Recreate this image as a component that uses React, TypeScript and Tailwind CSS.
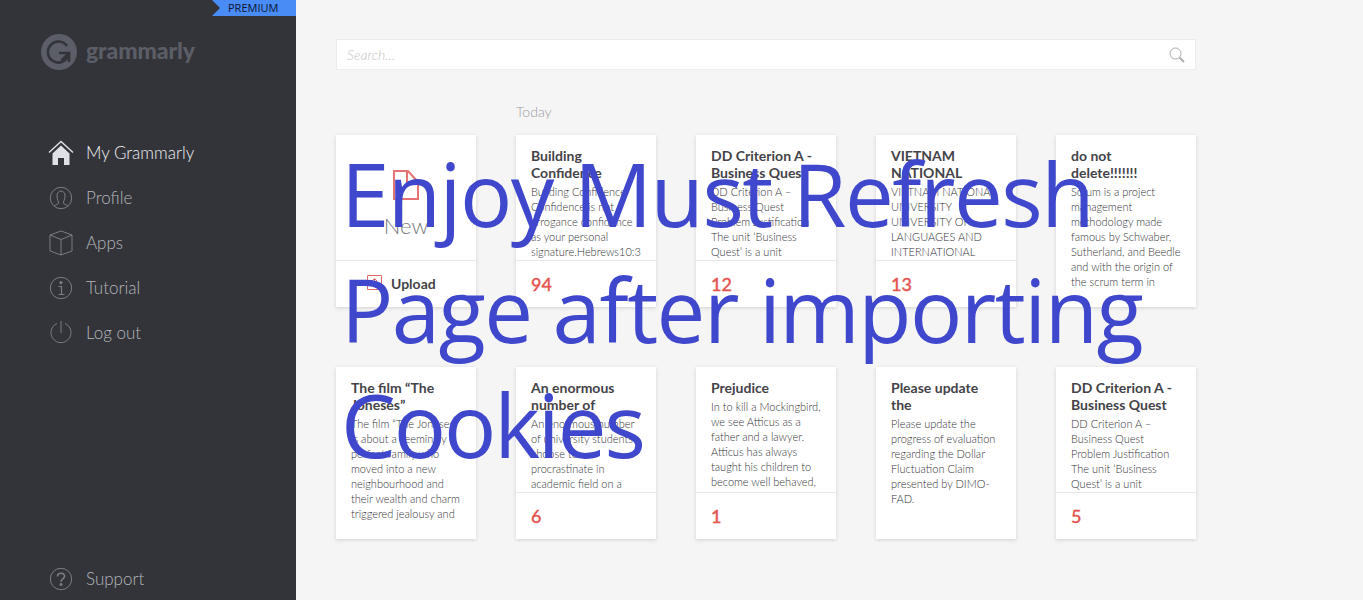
import React from "react";

type CardData = { title: string[]; body: string[]; count?: string };

const row1: CardData[] = [
  { title: ["Building", "Confidence"], body: ["Building Confidence", "Confidence is not", "arrogance confidence", "as your personal", "signature.Hebrews10:3"], count: "94" },
  { title: ["DD Criterion A -", "Business Quest"], body: ["DD Criterion A –", "Business Quest", "Problem Justification", "The unit ‘Business", "Quest’ is a unit"], count: "12" },
  { title: ["VIETNAM", "NATIONAL"], body: ["VIETNAM NATIONAL", "UNIVERSITY", "UNIVERSITY OF", "LANGUAGES AND", "INTERNATIONAL"], count: "13" },
  { title: ["do not", "delete!!!!!!!"], body: ["Scrum is a project", "management", "methodology made", "famous by Schwaber,", "Sutherland, and Beedle", "and with the origin of", "the scrum term in"] },
];

const row2: CardData[] = [
  { title: ["The film “The", "Joneses”"], body: ["The film “The Joneses”", "is about a seemingly", "perfect family who", "moved into a new", "neighbourhood and", "their wealth and charm", "triggered jealousy and"] },
  { title: ["An enormous", "number of"], body: ["An enormous number", "of university students", "choose to", "procrastinate in", "academic field on a"], count: "6" },
  { title: ["Prejudice"], body: ["In to kill a Mockingbird,", "we see Atticus as a", "father and a lawyer.", "Atticus has always", "taught his children to", "become well behaved,"], count: "1" },
  { title: ["Please update", "the"], body: ["Please update the", "progress of evaluation", "regarding the Dollar", "Fluctuation Claim", "presented by DIMO-", "FAD."] },
  { title: ["DD Criterion A -", "Business Quest"], body: ["DD Criterion A –", "Business Quest", "Problem Justification", "The unit ‘Business", "Quest’ is a unit"], count: "5" },
];

function Card({ title, body, count }: CardData) {
  return (
    <div className="w-[140px] h-[172px] bg-white shadow-[0_1px_4px_rgba(0,0,0,0.14)] flex flex-col">
      <div className={`${count ? "h-[125px]" : "h-[172px]"} overflow-hidden px-[15px] pt-[12px]`}>
        <div className="text-[14px] leading-[17px] font-bold text-[#444348]">
          {title.map((t) => (
            <div key={t} className="whitespace-nowrap">{t}</div>
          ))}
        </div>
        <div className="mt-[3px] text-[11px] leading-[15px] font-light text-[#333338]">
          {body.map((t) => (
            <div key={t} className="whitespace-nowrap">{t}</div>
          ))}
        </div>
      </div>
      {count && (
        <div className="flex-1 border-t border-[#e8e8e8] px-[15px] pt-[13px] text-[18px] leading-[21px] font-medium text-[#e5534f] [-webkit-text-stroke:0.3px_#e5534f]">
          {count}
        </div>
      )}
    </div>
  );
}

function NewCard() {
  return (
    <div className="w-[140px] h-[172px] bg-white shadow-[0_1px_4px_rgba(0,0,0,0.14)] flex flex-col">
      <div className="h-[125px] flex flex-col items-center pt-[35px]">
        <svg width="26" height="30" viewBox="0 0 26 30" fill="none" stroke="#e57373" strokeWidth="2">
          <path d="M1 1h14l10 11v17H1z" />
          <path d="M14 1v11h11" />
        </svg>
        <div className="mt-[13px] text-[22px] leading-[25px] font-light text-[#77777b]">New</div>
      </div>
      <div className="flex-1 border-t border-[#e8e8e8] flex items-start gap-[9px] pt-[14px] pl-[31px]">
        <svg width="15" height="15" viewBox="0 0 15 15" fill="none" stroke="#e46a6a" strokeWidth="1">
          <path d="M.5.5h14v14H.5z" />
          <path d="M7.5 11V4M5 6l2.5-2.5L10 6" />
        </svg>
        <div className="text-[14px] leading-[17px] font-bold text-[#444348]">Upload</div>
      </div>
    </div>
  );
}

const stroke = "#7b7d82";

const icons: Record<string, React.ReactNode> = {
  home: (
    <svg width="26" height="26" viewBox="0 0 26 26" fill="none">
      <path d="M1 12.5 13 1.5l12 11" stroke="#dfe1e6" strokeWidth="1.4" />
      <path d="M4.5 13.5 13 5.5l8.5 8V25H16v-7h-6v7H4.5z" fill="#dfe1e6" />
    </svg>
  ),
  profile: (
    <svg width="24" height="24" viewBox="0 0 24 24" fill="none" stroke={stroke} strokeWidth="1">
      <circle cx="12" cy="12" r="10.7" />
      <path d="M5 20c2-1.500 4-1.500 4.600-3 .3-1-1.600-3-1.600-7 0-3 1.600-5 4-5s4 2 4 5c0 4-1.900 6-1.600 7 .6 1.500 2.600 1.500 4.600 3" />
    </svg>
  ),
  apps: (
    <svg width="24" height="26" viewBox="0 0 24 26" fill="none" stroke={stroke} strokeWidth="1">
      <path d="M12 1 23 5v16l-11 4-11-4V5z" />
      <path d="M1 5l11 4.500L23 5M12 9.500V25" />
    </svg>
  ),
  tutorial: (
    <svg width="24" height="24" viewBox="0 0 24 24" fill="none" stroke={stroke} strokeWidth="1">
      <circle cx="12" cy="12" r="10.700" />
      <circle cx="12" cy="6.700" r="1.200" fill={stroke} />
      <path d="M9.500 10.500H12.500V18M9.500 18.500h6" strokeWidth="1.200" />
    </svg>
  ),
  logout: (
    <svg width="24" height="24" viewBox="0 0 24 24" fill="none" stroke={stroke} strokeWidth="1">
      <path d="M8 2.500a10 10 0 1 0 8 0" />
      <path d="M12 0v12" />
    </svg>
  ),
  support: (
    <svg width="24" height="24" viewBox="0 0 24 24" fill="none" stroke={stroke} strokeWidth="1">
      <circle cx="12" cy="12" r="10.700" />
      <path d="M8.500 9.500c0-2 1.500-3.300 3.500-3.300s3.500 1.300 3.500 3.100c0 2.700-3.500 2.700-3.500 5.500" strokeWidth="1.600" />
      <circle cx="12" cy="17.500" r="1.100" fill={stroke} />
    </svg>
  ),
};

function NavItem({ icon, label, active }: { icon: string; label: string; active?: boolean }) {
  return (
    <div className="h-[45px] flex items-center">
      <div className="w-[26px] h-[26px] ml-[48px] mr-[12px] flex items-center justify-center">{icons[icon]}</div>
      <span className={`text-[17px] font-light ${active ? "text-[#eef0f4]" : "text-[#b4b6ba]"}`}>{label}</span>
    </div>
  );
}

export default function App() {
  return (
    <div className="relative h-screen flex overflow-hidden bg-[#f5f5f5] font-['Lato',sans-serif]">
      <aside className="relative w-[296px] shrink-0 bg-[#33343a] flex flex-col">
        <div className="self-end w-[84px] h-[16px] bg-[#4a8cf5] [clip-path:polygon(0_0,100%_0,100%_100%,0_100%,8px_50%)] pl-[16px] text-[11px] leading-[16px] text-[#0b1230] font-['Open_Sans',sans-serif] font-medium">
          PREMIUM
        </div>
        <div className="flex items-center ml-[41px] mt-[18px] gap-[9px]">
          <svg width="36" height="36" viewBox="0 0 36 36">
            <circle cx="18" cy="18" r="18" fill="#5b5e66" />
            <path d="M26 12a10.500 10.500 0 1 0 1.500 9" fill="none" stroke="#33343a" strokeWidth="2.600" />
            <path d="M18 19h10v9M27.500 19.500l-7 7" fill="none" stroke="#33343a" strokeWidth="2.600" />
          </svg>
          <span className="text-[23px] leading-[24px] mb-[4px] font-black text-[#5b5e66] tracking-[-0.1px]">grammarly</span>
        </div>
        <nav className="mt-[60px]">
          <NavItem icon="home" label="My Grammarly" active />
          <NavItem icon="profile" label="Profile" />
          <NavItem icon="apps" label="Apps" />
          <NavItem icon="tutorial" label="Tutorial" />
          <NavItem icon="logout" label="Log out" />
        </nav>
        <div className="mt-auto mb-[-1px]">
          <NavItem icon="support" label="Support" />
        </div>
      </aside>
      <main className="flex-1 pl-[40px] pt-[39px]">
        <div className="w-[860px] h-[31px] bg-white border border-[#ececec] flex items-center justify-between pl-[10px] pr-[10px]">
          <span className="text-[14px] italic font-light text-[#c4c4c4]">Search...</span>
          <svg width="16" height="16" viewBox="0 0 16 16" fill="none" stroke="#aaaaaa">
            <circle cx="6.500" cy="6.500" r="5.500" />
            <path d="M10.500 10.500 15 15" strokeWidth="1.800" />
          </svg>
        </div>
        <div className="mt-[32px] ml-[180px] h-[33px] text-[14px] leading-[20px] font-light text-[#9c9ca0]">Today</div>
        <div className="grid grid-cols-[repeat(5,140px)] gap-x-[40px] gap-y-[60px]">
          <NewCard />
          {row1.map((c, i) => <Card key={i} {...c} />)}
          {row2.map((c, i) => <Card key={i} {...c} />)}
        </div>
      </main>
      <div className="absolute left-[341px] top-[135px] text-[#3f48cc] text-[87px] leading-[117px] tracking-[-1.55px] font-['Open_Sans',sans-serif] whitespace-nowrap pointer-events-none">
        <div>Enjoy Must Refresh</div>
        <div className="-mt-[1px]">Page after importing</div>
        <div className="-mt-[2px] tracking-[-2.1px]">Cookies</div>
      </div>
    </div>
  );
}
